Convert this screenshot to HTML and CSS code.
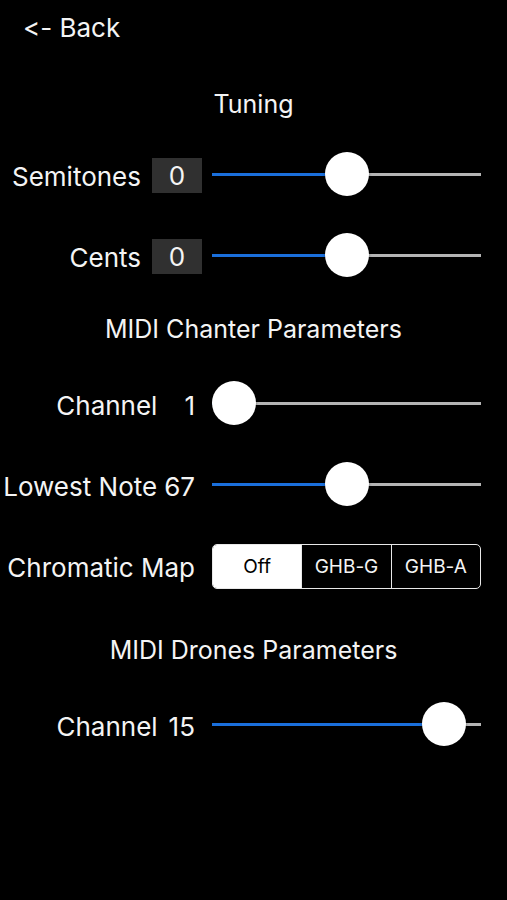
FILE: index.html
```html
<!DOCTYPE html>
<html lang="en">
<head>
    <meta charset="UTF-8">
    <meta name="viewport" content="width=device-width, initial-scale=1.0">
    <title>Settings</title>
<link rel="stylesheet" href="styles.css">
</head>
<body>
    <div id="screen">
        <div class="back">&lt;- Back</div>

        <div class="judul pertama">Tuning</div>
        <div class="baris">
            <div class="kiri"><span class="teks">Semitones</span><span class="kotak">0</span></div>
            <div class="slider" style="--p: 0.5"><div class="rel"></div><div class="isi"></div><div class="jempol"></div></div>
        </div>
        <div class="baris">
            <div class="kiri"><span class="teks">Cents</span><span class="kotak">0</span></div>
            <div class="slider" style="--p: 0.5"><div class="rel"></div><div class="isi"></div><div class="jempol"></div></div>
        </div>

        <div class="judul">MIDI Chanter Parameters</div>
        <div class="baris">
            <div class="kiri"><span class="teks">Channel</span><span class="teks nilai lebar">1</span></div>
            <div class="slider" style="--p: 0"><div class="rel"></div><div class="isi"></div><div class="jempol"></div></div>
        </div>
        <div class="baris">
            <div class="kiri"><span class="teks">Lowest Note</span><span class="teks nilai spasi">67</span></div>
            <div class="slider" style="--p: 0.5"><div class="rel"></div><div class="isi"></div><div class="jempol"></div></div>
        </div>
        <div class="baris">
            <div class="kiri"><span class="teks nilai">Chromatic Map</span></div>
            <div class="segmen">
                <div class="pilih aktif">Off</div>
                <div class="pilih">GHB-G</div>
                <div class="pilih">GHB-A</div>
            </div>
        </div>

        <div class="judul drone">MIDI Drones Parameters</div>
        <div class="baris">
            <div class="kiri"><span class="teks">Channel</span><span class="teks nilai dua">15</span></div>
            <div class="slider" style="--p: 0.9333"><div class="rel"></div><div class="isi"></div><div class="jempol"></div></div>
        </div>
    </div>
</body>
</html>
```

FILE: styles.css
```css
*{
    padding: 0;
    margin: 0;
    box-sizing: border-box;
}
body{
    background: #000;
    color: #f4f4f4;
    font-family: Inter, "Liberation Sans", sans-serif;
    font-feature-settings: "calt" 0, "liga" 0;
}
#screen{
    width: 507px;
    height: 900px;
    display: flex;
    flex-direction: column;
}
.back{
    height: 56px;
    line-height: 56px;
    padding-left: 23px;
    font-size: 26px;
}
.judul{
    height: 56px;
    line-height: 56px;
    text-align: center;
    font-size: 25px;
    margin-top: 23px;
    margin-bottom: 25px;
}
.pertama{
    margin-top: 20px;
    margin-bottom: 21px;
}
.drone{
    margin-top: 34px;
}
.baris{
    height: 44px;
    display: flex;
    align-items: center;
    padding-right: 26px;
    font-size: 26px;
}
.baris + .baris{
    margin-top: 37px;
}
.kiri{
    flex: 1;
    display: flex;
    justify-content: flex-end;
    align-items: center;
    padding-right: 10px;
    white-space: nowrap;
}
.teks{
    padding-top: 2px;
}
.kotak{
    width: 50px;
    height: 35px;
    line-height: 35px;
    margin-left: 11px;
    text-align: center;
    background: #303030;
}
.nilai{
    padding-right: 7px;
}
.spasi{
    padding-left: 7px;
}
.lebar{
    padding-left: 27px;
}
.dua{
    padding-left: 11px;
}
.slider{
    position: relative;
    width: 269px;
    height: 44px;
}
.rel, .isi{
    position: absolute;
    left: 0;
    top: 20px;
    height: 3px;
}
.rel{
    right: 0;
    background: #b4b4b4;
}
.isi{
    width: calc(22px + (100% - 44px) * var(--p));
    background: #1a6fdc;
}
.jempol{
    position: absolute;
    top: -1px;
    left: calc((100% - 44px) * var(--p));
    width: 44px;
    height: 44px;
    border-radius: 50%;
    background: #fff;
    box-shadow: 0 1px 3px rgba(0,0,0,0.4);
}
.segmen{
    width: 269px;
    height: 45px;
    display: flex;
    border: 1px solid #e8e8e8;
    border-radius: 5px;
    overflow: hidden;
}
.pilih{
    flex: 1;
    display: flex;
    align-items: center;
    justify-content: center;
    font-size: 19px;
    border-left: 1px solid #e8e8e8;
}
.pilih:first-child{
    border-left: none;
}
.aktif{
    background: #fff;
    color: #000;
}
```
